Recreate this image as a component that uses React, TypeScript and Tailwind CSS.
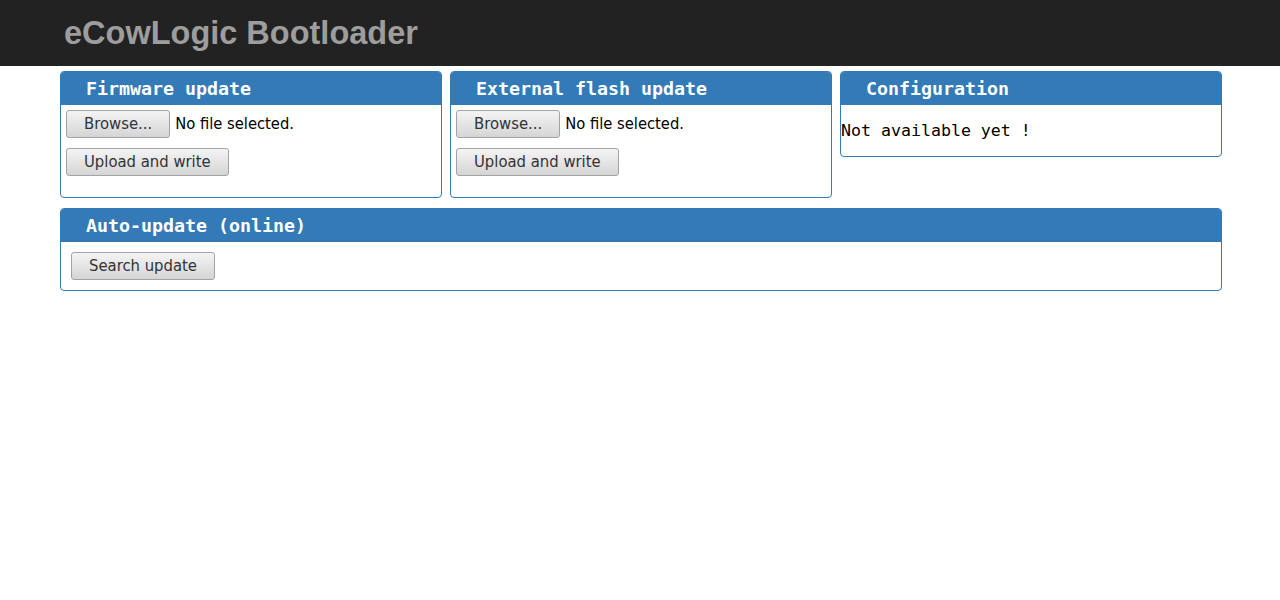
import React from 'react';

const Btn = ({ children }: { children: React.ReactNode }) => (
  <button className="h-[28px] px-[17px] rounded-[3px] border border-[#a3a3a3] bg-gradient-to-b from-[#f4f4f4] to-[#d5d5d5] text-[#333] text-[16.5px] leading-none font-['DejaVu_Sans_Condensed','DejaVu_Sans',sans-serif] [font-stretch:condensed]">
    {children}
  </button>
);

const Panel = ({ title, children, bodyClass }: { title: string; children: React.ReactNode; bodyClass: string }) => (
  <div className="border border-[#337ab7] rounded-[4px] overflow-hidden bg-white">
    <div className="h-[33px] bg-[#337ab7] pl-[25px] flex items-center text-white font-bold text-[18.3px] font-['DejaVu_Sans_Mono',monospace]">
      {title}
    </div>
    <div className={bodyClass}>{children}</div>
  </div>
);

const FileBox = () => (
  <div className="flex flex-col items-start gap-[10px]">
    <div className="flex items-center gap-[5px]">
      <Btn>Browse...</Btn>
      <span className="text-[16.4px] text-black font-['DejaVu_Sans_Condensed','DejaVu_Sans',sans-serif] [font-stretch:condensed]">No file selected.</span>
    </div>
    <Btn>Upload and write</Btn>
  </div>
);

export default function App() {
  return (
    <div className="min-h-[600px] bg-white">
      {/* Barre du haut */}
      <div className="h-[66px] bg-[#222222] flex items-center pl-[64px]">
        <h1 className="text-[32.5px] font-bold text-[#9d9d9d] font-['Liberation_Sans',Arial,sans-serif] leading-none">
          eCowLogic Bootloader
        </h1>
      </div>

      <div className="ml-[60px] w-[1162px] mt-[5px]">
        <div className="grid grid-cols-3 gap-2 items-start">
          <Panel title="Firmware update" bodyClass="pt-[5px] pl-[5px] pb-[21px]">
            <FileBox />
          </Panel>
          <Panel title="External flash update" bodyClass="pt-[5px] pl-[5px] pb-[21px]">
            <FileBox />
          </Panel>
          <Panel title="Configuration" bodyClass="py-[16px]">
            <p className="text-[16.6px] leading-[19px] text-black font-['DejaVu_Sans_Mono',monospace]">Not available yet !</p>
          </Panel>
        </div>

        <div className="mt-[10px]">
          <Panel title="Auto-update (online)" bodyClass="p-[10px]">
            <Btn>Search update</Btn>
          </Panel>
        </div>
      </div>
    </div>
  );
}
